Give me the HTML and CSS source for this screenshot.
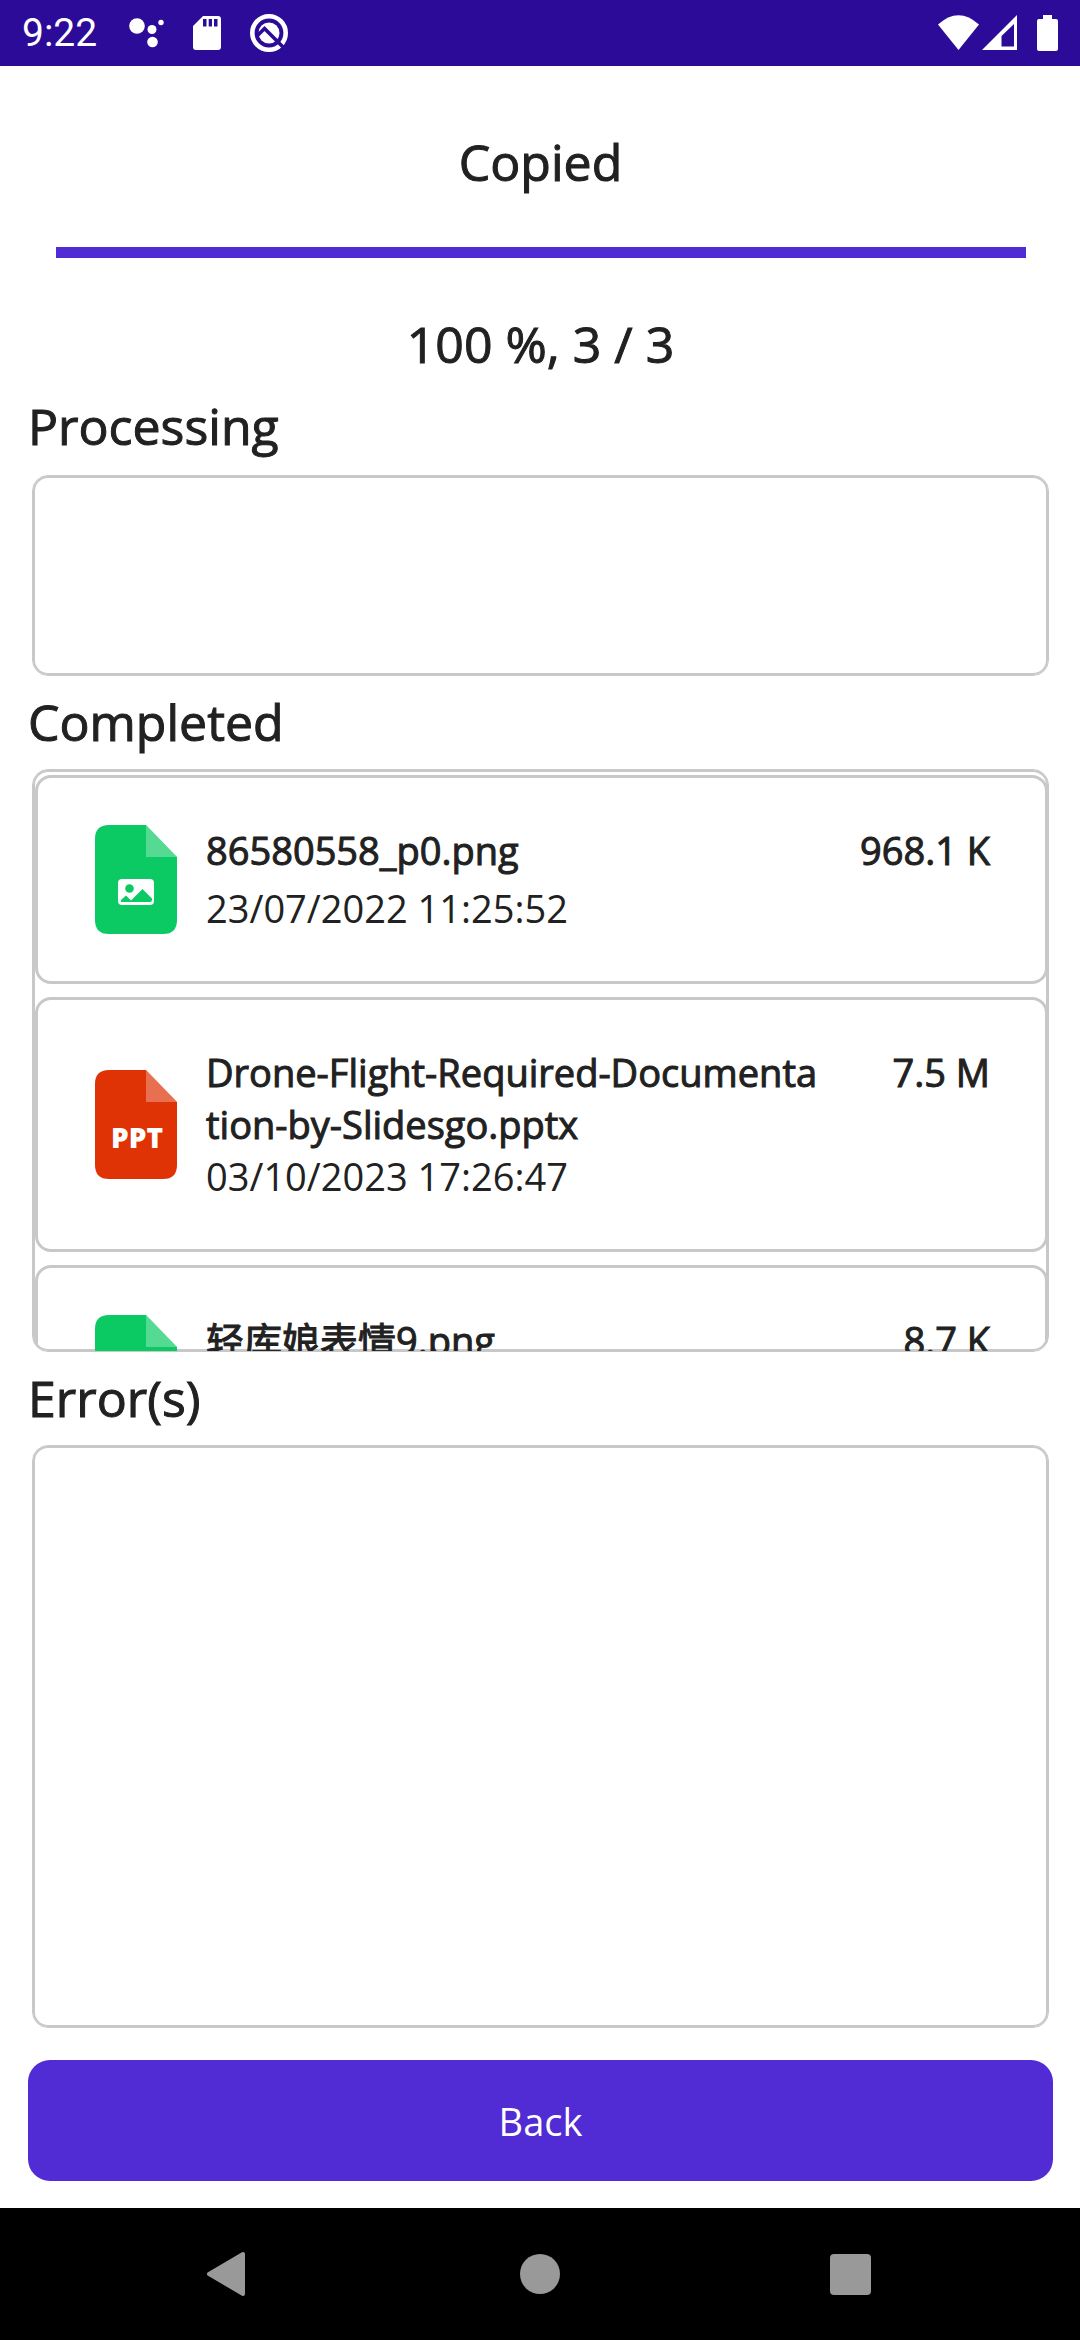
FILE: index.html
```html
<!DOCTYPE html>
<html lang="en">
<head>
<meta charset="utf-8">
<meta name="viewport" content="width=device-width, initial-scale=1">
<title>Copied</title>
<link rel="stylesheet" href="styles.css">
</head>
<body>
<svg class="defs" width="0" height="0" aria-hidden="true">
  <symbol id="file-image" viewBox="0 -1 82 110">
    <path fill="#0bca63" d="M14 0H51L82 32V95Q82 109 68 109H14Q0 109 0 95V14Q0 0 14 0Z"/>
    <path fill="#fff" fill-opacity=".3" d="M51 0L82 32H51Z"/>
    <rect x="23" y="54" width="36" height="26" rx="4" fill="#fff"/>
    <circle cx="34.500" cy="63.500" r="4.300" fill="#0bca63"/>
    <path fill="#0bca63" d="M26 77V75L31 70.500L36 75.500L47.500 64L57 73.500V75Q57 77 55 77Z"/>
  </symbol>
</svg>

<header class="status-bar">
  <time class="clock">9:22</time>
  <div class="status-icons">
    <svg width="36" height="32" viewBox="0 0 36 32" fill="#fff"><circle cx="8" cy="9" r="7.800"/><circle cx="23" cy="12.500" r="4.500"/><circle cx="32" cy="5.500" r="2.700"/><circle cx="23.500" cy="25" r="5.300"/></svg>
    <svg width="28" height="36" viewBox="0 0 28 36"><path fill="#fff" fill-rule="evenodd" d="M10 1H25Q28 1 28 4V32Q28 35 25 35H3Q0 35 0 32V11ZM10 4V11.500H13.500V4ZM15.700 4V11.500H19V4ZM21 4V11.500H24.500V4Z"/></svg>
    <svg width="40" height="40" viewBox="0 0 40 40"><circle cx="20" cy="20" r="16.700" fill="none" stroke="#fff" stroke-width="4.600"/><circle cx="20" cy="20" r="10.500" fill="#fff"/><path d="M8 23L15.500 15.500L35 35" fill="none" stroke="#2b0b98" stroke-width="3.600"/></svg>
  </div>
  <div class="system-icons">
    <svg width="42" height="36" viewBox="0 0 42 36" fill="#fff"><path d="M0 9.500Q20.500 -9 41 9.500L20.500 35Z"/></svg>
    <svg width="36" height="36" viewBox="0 0 36 36"><path fill="#fff" fill-rule="evenodd" d="M35 0V35H0ZM32 9L19.500 21V31.500H32Z"/></svg>
    <svg class="battery" width="22" height="36" viewBox="0 0 22 36" fill="#fff"><path d="M6 0H15V4H19Q21 4 21 6V34Q21 36 19 36H2Q0 36 0 34V6Q0 4 2 4H6Z"/></svg>
  </div>
</header>

<main class="screen">
  <h1 class="title">Copied</h1>
  <progress class="progress" value="100" max="100" aria-label="Copy progress"></progress>
  <p class="title">100 %, 3 / 3</p>

  <h2 class="title section-title">Processing</h2>
  <section class="panel panel-short" aria-label="Processing"></section>

  <h2 class="title section-title">Completed</h2>
  <section class="panel" aria-label="Completed">
    <ul class="files">
      <li class="file">
        <svg class="file-icon" width="82" height="110"><use href="#file-image"/></svg>
        <div class="file-text">
          <span class="file-name">86580558_p0.png</span>
          <time class="file-date">23/07/2022 11:25:52</time>
        </div>
        <span class="file-size">968.1 K</span>
      </li>
      <li class="file">
        <svg class="file-icon" width="82" height="110" viewBox="0 -1 82 110">
          <path fill="#df3305" d="M14 0H51L82 32V95Q82 109 68 109H14Q0 109 0 95V14Q0 0 14 0Z"/>
          <path fill="#fff" fill-opacity=".3" d="M51 0L82 32H51Z"/>
          <text class="file-badge" x="42" y="78" text-anchor="middle">PPT</text>
        </svg>
        <div class="file-text">
          <span class="file-name">Drone-Flight-Required-Documentation-by-Slidesgo.pptx</span>
          <time class="file-date">03/10/2023 17:26:47</time>
        </div>
        <span class="file-size">7.5 M</span>
      </li>
      <li class="file">
        <svg class="file-icon" width="82" height="110"><use href="#file-image"/></svg>
        <div class="file-text">
          <span class="file-name">轻库娘表情9.png</span>
        </div>
        <span class="file-size">8.7 K</span>
      </li>
    </ul>
  </section>

  <h2 class="title section-title">Error(s)</h2>
  <section class="panel" aria-label="Errors"></section>

  <button class="back" type="button">Back</button>
</main>

<nav class="nav-bar" aria-label="System navigation">
  <button type="button" aria-label="Back"><svg width="46" height="46" viewBox="0 0 46 46"><path d="M3 23L37 3V43Z" fill="#999" stroke="#999" stroke-width="4" stroke-linejoin="round"/></svg></button>
  <button type="button" aria-label="Home"><svg width="46" height="46" viewBox="0 0 46 46"><circle cx="23" cy="23" r="20" fill="#999"/></svg></button>
  <button type="button" aria-label="Recent apps"><svg width="46" height="46" viewBox="0 0 46 46"><rect x="2" y="3" width="41" height="41" rx="4" fill="#999"/></svg></button>
</nav>
</body>
</html>
```
FILE: styles.css
```css
* {
  box-sizing: border-box;
}

body {
  margin: 0;
  height: 100vh;
  display: flex;
  flex-direction: column;
  background: #fff;
  color: #212121;
  font-family: "Open Sans", "Noto Sans CJK SC", sans-serif;
  font-size: 38px;
}

svg {
  display: block;
  flex: none;
}

.defs {
  position: absolute;
}

/* Status bar */
.status-bar {
  flex: none;
  display: flex;
  align-items: center;
  height: 66px;
  padding: 0 21px 0 22px;
  background: #2b0b98;
  color: #fff;
}

.clock {
  font-family: Roboto, sans-serif;
  font-size: 39px;
  line-height: 48px;
}

.status-icons {
  display: flex;
  align-items: center;
  gap: 28px;
  margin-left: 32px;
}

.system-icons {
  display: flex;
  align-items: center;
  gap: 2px;
  margin-left: auto;
}

.battery {
  margin-left: 17px;
}

/* Page */
.screen {
  flex: 1;
  min-height: 0;
  display: flex;
  flex-direction: column;
  padding: 61px 27px 27px 28px;
}

.title {
  margin: 0;
  font-size: 50px;
  font-weight: 400;
  line-height: 71px;
  text-align: center;
  -webkit-text-stroke: 1px currentColor;
}

.section-title {
  padding: 11px 0;
  text-align: left;
}

.progress {
  appearance: none;
  display: block;
  flex: none;
  width: auto;
  height: 11px;
  margin: 49px 27px 51px 28px;
  border: 0;
  background: #512bd4;
}

.progress::-webkit-progress-bar {
  background: #ddd;
}

.progress::-webkit-progress-value {
  background: #512bd4;
}

.panel {
  flex: 1;
  min-height: 0;
  margin: 0 4px;
  overflow: hidden;
  border: 1px solid #c8c8c8;
  border-radius: 16px;
  box-shadow: inset 0 0 0 2px #c8c8c8;
}

.panel-short {
  flex: none;
  height: 201px;
  margin-top: 2px;
}

.files {
  display: flex;
  flex-direction: column;
  gap: 13px;
  margin: 0;
  padding: 5px 0 5px 2px;
  list-style: none;
}

.file {
  display: grid;
  grid-template-columns: 82px minmax(0, 1fr) 164px;
  align-items: center;
  padding: 46px 55px 47px 57px;
  border: 3px solid #c8c8c8;
  border-radius: 16px;
}

.file-text {
  align-self: stretch;
  display: flex;
  flex-direction: column;
  justify-content: space-between;
  padding-left: 29px;
}

.file-name,
.file-size {
  -webkit-text-stroke: 1px currentColor;
}

.file-name,
.file-size,
.file-date {
  line-height: 52px;
}

.file-name {
  word-break: break-all;
}

.file-size {
  align-self: start;
  text-align: right;
}

.file-badge {
  fill: #fff;
  font-size: 28px;
  font-weight: 800;
}

.back {
  flex: none;
  height: 121px;
  margin-top: 32px;
  border: 0;
  border-radius: 22px;
  background: #512bd4;
  color: #fff;
  font: inherit;
}

/* System navigation */
.nav-bar {
  flex: none;
  display: grid;
  grid-template-columns: repeat(3, 1fr);
  height: 132px;
  padding: 0 73px;
  background: #000;
}

.nav-bar button {
  display: grid;
  place-items: center;
  padding: 0;
  border: 0;
  background: none;
}
```
